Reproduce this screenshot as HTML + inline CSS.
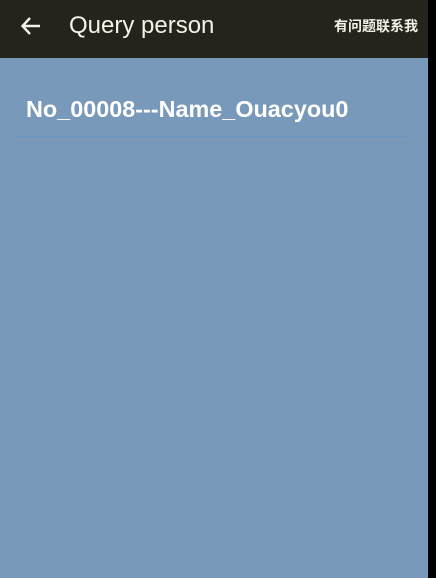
<!DOCTYPE html>
<html><head><style>
html,body{margin:0;padding:0;width:436px;height:578px;overflow:hidden;background:#000;}
.page{position:absolute;left:0;top:0;width:428px;height:578px;background:#7899b9;}
.bar{position:absolute;left:0;top:0;width:428px;height:58px;background:#24241c;}
.title{position:absolute;left:69px;top:12px;color:#f2f2e6;font:24px "Liberation Sans",sans-serif;}
.right{position:absolute;left:334px;top:16px;color:#f2f2e6;font:bold 14px "Liberation Sans","Noto Sans CJK SC",sans-serif;}
.item{position:absolute;left:26px;top:96px;color:#fff;font:bold 23.4px "Liberation Sans",sans-serif;}
.line{position:absolute;left:16px;top:136px;width:392px;height:1px;background:#6a95c8;}
</style></head><body>
<div class="page">
<div class="bar">
<svg style="position:absolute;left:20px;top:15px" width="22" height="22" viewBox="0 0 22 22"><path d="M20 11H3M10 3L2.5 11L10 19" stroke="#f2f2e6" stroke-width="2.4" fill="none"/></svg>
<div class="title">Query person</div>
<div class="right">有问题联系我</div>
</div>
<div class="item">No_00008---Name_Ouacyou0</div>
<div class="line"></div>
</div>
</body></html>
